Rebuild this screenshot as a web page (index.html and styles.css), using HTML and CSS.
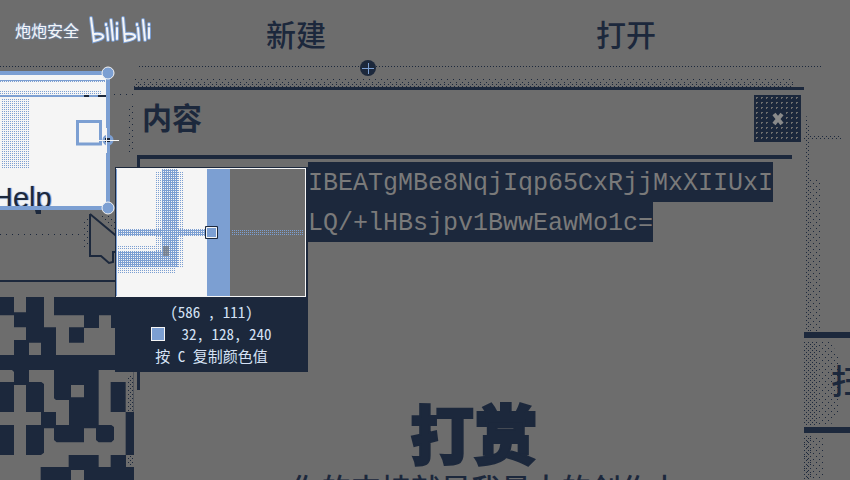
FILE: index.html
```html
<!DOCTYPE html>
<html lang="zh-CN">
<head>
<meta charset="utf-8">
<title>内容</title>
<link rel="stylesheet" href="styles.css">
</head>
<body>
<svg class="defs" width="0" height="0" aria-hidden="true">
  <defs>
    <pattern id="dots-navy" width="4" height="4" patternUnits="userSpaceOnUse"><path fill="#1c283c" d="M0 0h1v1h-1zM2 2h1v1h-1z"/></pattern>
    <pattern id="dots-wide" width="6" height="6" patternUnits="userSpaceOnUse"><path fill="#1c283c" d="M0 0h1v1h-1zM3 3h1v1h-1z"/></pattern>
    <pattern id="dots-blue" width="2" height="2" patternUnits="userSpaceOnUse"><path fill="#7c9fd2" d="M0 0h1v1h-1z"/></pattern>
    <pattern id="dense-blue" width="2" height="2" patternUnits="userSpaceOnUse"><path fill="#7c9fd2" d="M0 0h2v1h-1v1h-1z"/></pattern>
  </defs>
</svg>
<header class="toolbar">
  <div class="brand">
    <span>炮炮安全</span>
    <svg class="logo" viewBox="0 0 62 28" role="img" aria-label="bilibili">
      <g class="logo-edge"><path d="M2 2L5 25Q15 23 14 20Q13 17 5 18M18 12L19 24M22 4L24 24M28 12L28 23M34 2L36 25Q47 23 46 20Q45 17 36 18M49 12L50 24M54 4L56 24M60 12L60 22M17 8v1M28 7v1M48 8v1M60 8v1"/></g>
      <g class="logo-core"><path d="M2 2L5 25Q15 23 14 20Q13 17 5 18M18 12L19 24M22 4L24 24M28 12L28 23M34 2L36 25Q47 23 46 20Q45 17 36 18M49 12L50 24M54 4L56 24M60 12L60 22M17 8v1M28 7v1M48 8v1M60 8v1"/></g>
    </svg>
  </div>
  <button type="button">新建</button>
  <button type="button">打开</button>
</header>

<main class="desktop">
  <svg class="code" viewBox="0 261 402 549" aria-hidden="true">
    <path fill="#1c283c" d="M0 261H402V810H0z"/>
    <path fill="#6d6d6d" d="M42 261h36v46H42zM132 261h30v55h90v36h-45v46h45v-44h45v-38h36v38h12v81H168v-83h-36zM0 316h42v36h36v38H42v45H0zM87 398h36v37H87zM0 480h36l6 6v30H0zM87 480h75v85l6 5h39v75h-39v-39h-36v-84l-8-6H87zM42 525h36v81h45v39H78v90h45l9-7v-73h30v35l8 7h82v-42h36v35l8 7h38l8-8v-38l-8-6h-38V480h105v126h-24v-90h-45v90h45v129h-45v36h-36v-36h-90v36h-84v39H0v-75h42v-90H0v-39h42zM213 525h39v37h-39zM213 780h39v30h-39z"/>
    <path fill="#6d6d6d" d="M378 735h24v36h-24z"/>
    <g transform="scale(3)"><path fill="url(#dots-navy)" d="M128 165h5v37h-5zM127 246h6v10h-6z"/></g>
  </svg>
  <svg class="backdrop" viewBox="0 0 134 80" aria-hidden="true">
    <path fill="url(#dots-wide)" d="M0 22h90v4H0zM84 8h5v30h-5zM96 4h12l8 8v12z"/>
    <path fill="#1c283c" d="M35 0h6v4h-5zM0 70h134v2H0z"/>
    <path fill="none" stroke="#1c283c" stroke-width="2" d="M90 4v42h11l8 7 4-1v-10h6M90 4l30 25"/>
  </svg>

  <section class="dialog" aria-labelledby="dialog-title">
    <div class="dialog-head">
      <h1 id="dialog-title">内容</h1>
      <button type="button" class="close" aria-label="关闭"><svg viewBox="0 0 14 14"><path d="M3 2l8 10M11 2L3 12"/></svg></button>
    </div>
    <div class="dialog-body">
      <p class="key"><mark>IBEATgMBe8NqjIqp65CxRjjMxXIIUxI</mark><br><mark>LQ/+lHBsjpv1BwwEawMo1c=</mark></p>
      <h2>打赏</h2>
      <p class="thanks">你的支持就是我最大的创作力</p>
    </div>
  </section>

  <svg class="shade" viewBox="0 0 46 390" aria-hidden="true">
    <path fill="url(#dots-navy)" d="M1 20l5 20v30l-1 20v154H1zM0 252h14v84H0z"/>
    <path fill="url(#dots-wide)" d="M5 90h12v154H5zM0 346h20v44H0zM14 252h12l8 12v60l-8 12H14z"/>
    <path fill="url(#dots-navy)" d="M0 346h8v44H0zM0 46h38v3H0z"/>
  </svg>
  <aside class="side"><span>扫</span></aside>

  <svg class="haze" viewBox="0 0 720 30" aria-hidden="true">
    <path stroke="#1c283c" stroke-dasharray="1 2" d="M0 2.500H100M139 2.500H821" />
    <path fill="url(#dots-navy)" d="M111 17h22v1h-22zM134 19h660v4H134z"/>
    <path fill="url(#dots-wide)" d="M134 15h660v4H134zM112 29h21v3h-21zM129 40h4v50h-4z"/>
    <circle cx="368" cy="4" r="8" fill="#1c283c"/>
    <path stroke="#7c9fd2" d="M362 4.500h12M368.500 -1v11"/>
  </svg>

  <div class="selection">
    <svg viewBox="0 0 126 148" aria-hidden="true">
      <path fill="#f5f5f5" d="M0 6h108v136H0z"/>
      <path fill="url(#dots-blue)" d="M0 14h105v2H0zM0 24h102v4H0zM1 32h29v69H1z"/>
      <path fill="#7c9fd2" d="M0 13h105v1H0zM0 28h104v2H0z"/>
      <path fill="#1c283c" d="M84 28h5v2h-5zM98 28h8v2h-8z"/>
      <path fill="none" stroke="#7c9fd2" stroke-width="3" d="M78 54.500h22.500V77H77.500V53"/>
    </svg>
    <span class="menu-word">Help</span>
    <svg class="frame" viewBox="0 0 126 148" aria-hidden="true">
      <path fill="none" stroke="#7c9fd2" stroke-width="4" d="M0 6h108v135H0"/>
      <g fill="#7c9fd2" stroke="#f5f5f5"><circle cx="108" cy="6" r="6"/><circle cx="108" cy="141" r="6"/></g>
      <circle cx="108" cy="73" r="5.500" fill="#7c9fd2"/>
      <path fill="#1c283c" d="M105 71h5v4h-5z"/>
      <path stroke="#f5f5f5" d="M93 73.500h26M106.500 61v25"/>
    </svg>
  </div>

  <div class="picker">
    <svg viewBox="0 0 190 129" aria-hidden="true">
      <path fill="#f5f5f5" d="M0 0h190v129H0z"/>
      <path fill="#6d6d6d" d="M114 1h75v127h-75z"/>
      <path fill="#7c9fd2" d="M91 1h23v127H91zM0 1h1v127H0z"/>
      <path fill="url(#dots-blue)" d="M40 3h28v96H40zM2 77h40v5H2zM2 99h57v6H2z"/>
      <path fill="url(#dense-blue)" d="M46 1h16v97H46zM2 61h90v7H2zM2 83h60v16H2z"/>
      <path fill="url(#dots-blue)" d="M115 62h73v6h-73z"/>
      <path fill="#6d6d6d" opacity=".6" d="M47 78h6v10h-6z"/>
      <path fill="#7c9fd2" stroke="#1c283c" stroke-width="1" d="M89.500 58.500h12v12h-12z"/>
      <path fill="none" stroke="#f5f5f5" d="M90.500 59.500h10v10h-10z"/>
    </svg>
    <div class="readout">
      <span>(586 , 111)</span>
      <span class="rgb"><i class="swatch"></i>32, 128, 240</span>
      <span>按 C 复制颜色值</span>
    </div>
  </div>
</main>
</body>
</html>
```
FILE: styles.css
```css
:root {
  --gray: #6d6d6d;
  --navy: #1c283c;
  --blue: #7c9fd2;
  --white: #f5f5f5;
}
* { box-sizing: border-box; }
body {
  margin: 0;
  min-height: 100vh;
  display: flex;
  flex-direction: column;
  overflow: hidden;
  background: var(--gray);
  color: var(--navy);
  font-family: "Liberation Sans", "Noto Sans CJK SC", sans-serif;
}
.defs { position: absolute; }
h1, h2, p { margin: 0; }
button { border: 0; padding: 0; color: inherit; background: none; font: inherit; }
svg { display: block; overflow: visible; }

.toolbar {
  display: grid;
  grid-template-columns: 116px 1fr 1fr;
  align-items: center;
  height: 64px;
  padding: 8px 59px 0 15px;
  font-size: 30px;
  line-height: 40px;
}
.toolbar > button { justify-self: center; font-weight: 500; }
.brand {
  display: flex;
  align-self: start;
  gap: 10px;
  padding-top: 8px;
  color: var(--white);
  font-size: 16px;
  line-height: 24px;
  white-space: nowrap;
  text-shadow: 0 0 1px var(--blue), 0 0 2px var(--blue);
}
.brand span { padding-top: 4px; }
.logo { flex: none; width: 62px; height: 28px; }
.logo path { fill: none; stroke-linecap: round; }
.logo-edge { stroke: var(--blue); stroke-width: 4; }
.logo-core { stroke: var(--white); stroke-width: 2; }

.desktop { position: relative; flex: 1; min-height: 416px; }
.desktop > * { position: absolute; }
.code { left: 0; top: 233px; width: 134px; }
.backdrop { left: 0; top: 146px; width: 134px; }
.haze { left: 0; top: 0; width: 720px; }
.shade { right: 0; top: 26px; width: 46px; }

.dialog {
  left: 134px;
  right: 46px;
  top: 23px;
  bottom: 0;
  border-top: 3px solid var(--navy);
  overflow: hidden;
}
.dialog-head {
  display: flex;
  justify-content: space-between;
  align-items: center;
  height: 65px;
  padding: 0 3px 8px 8px;
}
.dialog-head h1 { font-size: 30px; line-height: 40px; font-weight: 700; }
.close {
  display: grid;
  place-items: center;
  width: 47px;
  height: 47px;
  background: radial-gradient(circle, var(--gray) 0 1px, transparent 1px) 0 0 / 5px 5px, var(--navy);
}
.close svg { width: 14px; height: 14px; background: var(--navy); }
.close path { fill: none; stroke: #8a8a8a; stroke-width: 4; }
.dialog-body {
  display: flex;
  flex-direction: column;
  align-items: center;
  height: 235px;
  margin: 0 12px 0 3px;
  border-top: 4px solid var(--navy);
  border-left: 3px solid var(--navy);
}
.key {
  align-self: flex-end;
  flex: none;
  width: 484px;
  padding-top: 3px;
  font: 25px/40px "Liberation Mono", monospace;
  white-space: nowrap;
}
.key mark {
  display: inline-block;
  height: 40px;
  line-height: 44px;
  vertical-align: top;
  background: var(--navy);
  color: #7a7a7a;
}
.dialog h2 {
  flex: none;
  margin-top: 163px;
  padding-left: 16px;
  font-size: 64px;
  line-height: 64px;
  font-weight: 900;
  -webkit-text-stroke: 2px var(--navy);
}
.thanks { flex: none; padding-left: 40px; font-size: 30px; line-height: 42px; font-weight: 500; white-space: nowrap; }

.side {
  left: 804px;
  right: 0;
  top: 268px;
  height: 101px;
  overflow: hidden;
  padding: 24px 0 0 27px;
  border: solid var(--navy);
  border-width: 6px 0;
  font-size: 34px;
  line-height: 40px;
  font-weight: 500;
}

.selection { left: 0; top: 3px; width: 126px; height: 148px; }
.selection svg { width: 126px; }
.selection .frame, .menu-word { position: absolute; left: 0; top: 0; }
.menu-word {
  left: -8px;
  top: 114px;
  height: 28px;
  overflow: hidden;
  font: 29px/34px "Liberation Sans", sans-serif;
  text-shadow: 0 0 1px var(--blue), 1px 0 1px var(--blue);
}
.picker {
  left: 115px;
  top: 103px;
  width: 193px;
  padding: 1px;
  background: var(--navy);
}
.picker svg { width: 190px; }
.readout {
  display: flex;
  flex-direction: column;
  align-items: center;
  padding: 4px 0;
  color: #d5e2f5;
  font: 15px/22px "Noto Sans CJK SC", sans-serif;
  font-feature-settings: "hwid";
}
.rgb { display: flex; align-items: center; gap: 16px; }
.swatch { width: 14px; height: 14px; border: 1px solid var(--white); background: var(--blue); }
```
